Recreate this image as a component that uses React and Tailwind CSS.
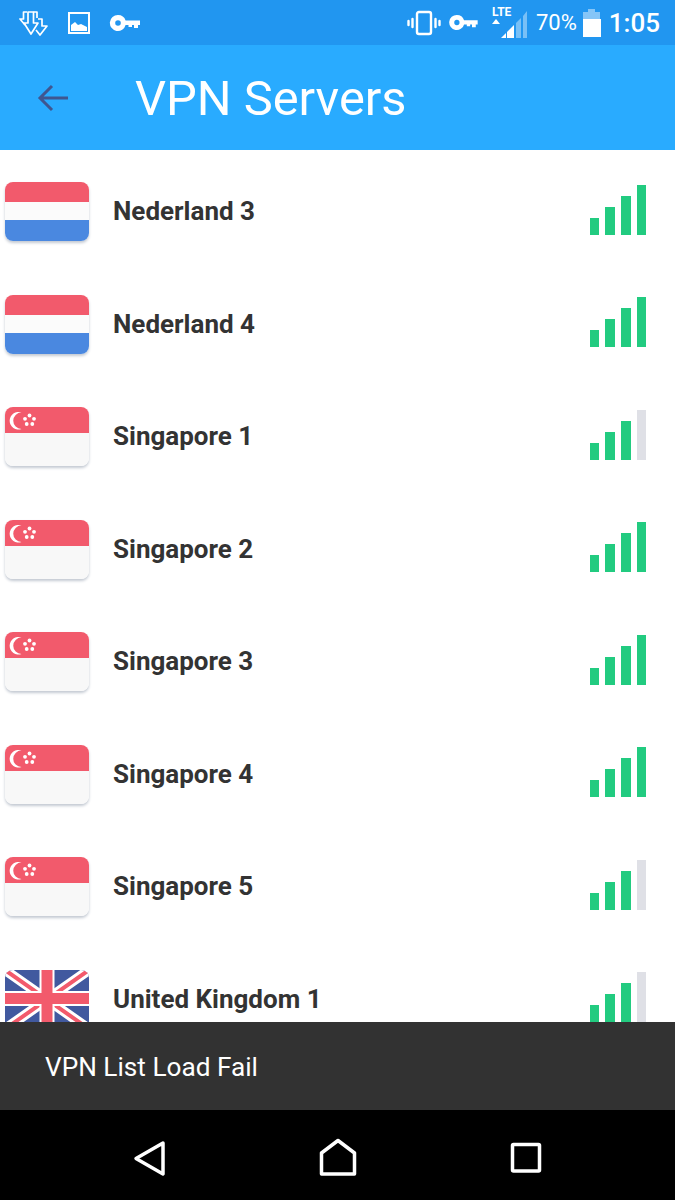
const font = { fontFamily: "Roboto, 'Liberation Sans', sans-serif" };

function Bars({ weak }) {
  return (
    <div className="flex items-end gap-[6px] h-[50px] mb-[4px]">
      <div className="w-[9px] h-[17px] bg-[#22cb80]" />
      <div className="w-[10px] h-[28px] bg-[#22cb80]" />
      <div className="w-[10px] h-[39px] bg-[#22cb80]" />
      <div className={`w-[9px] h-[50px] ${weak ? "bg-[#dfe0e6]" : "bg-[#22cb80]"}`} />
    </div>
  );
}

function FlagNL() {
  return (
    <div className="w-[84px] h-[59px] rounded-[8px] overflow-hidden flex flex-col shadow-[0_2px_3px_#c3c9d2]">
      <div className="h-[20px] bg-[#f25a6c]" />
      <div className="h-[18px] bg-[#fbfbfb]" />
      <div className="h-[21px] bg-[#4a88e0]" />
    </div>
  );
}

function FlagSG() {
  return (
    <div className="w-[84px] h-[59px] rounded-[8px] overflow-hidden flex flex-col shadow-[0_2px_3px_#c3c9d2]">
      <div className="h-[26px] bg-[#f25a6c]">
        <svg width="84" height="26" viewBox="0 0 84 26" className="block">
          <path d="M16.500 5.500 A8.800 8.800 0 1 0 16.500 22 A6.600 6.600 0 1 1 16.500 5.500 Z" fill="#fff" />
          <g fill="#fff">
            <circle cx="24.500" cy="8.500" r="1.900" />
            <circle cx="29" cy="11.800" r="1.900" />
            <circle cx="27.300" cy="17" r="1.900" />
            <circle cx="21.700" cy="17" r="1.900" />
            <circle cx="20" cy="11.800" r="1.900" />
          </g>
        </svg>
      </div>
      <div className="flex-1 bg-[#f8f8f8]" />
    </div>
  );
}

function FlagUK() {
  return (
    <div className="w-[84px] h-[59px] rounded-[8px] overflow-hidden bg-[#41599f]">
      <svg width="84" height="59" viewBox="0 0 84 59" className="block">
        <path d="M0 0 L84 59 M84 0 L0 59" stroke="#fff" strokeWidth="10" />
        <path d="M0 0 L84 59 M84 0 L0 59" stroke="#f25a6c" strokeWidth="4" />
        <path d="M42 0 V59 M0 28.500 H84" stroke="#fff" strokeWidth="15" />
        <path d="M42 0 V59 M0 28.500 H84" stroke="#f25a6c" strokeWidth="11" />
      </svg>
    </div>
  );
}

const rows = [
  ["nl", "Nederland 3", false],
  ["nl", "Nederland 4", false],
  ["sg", "Singapore 1", true],
  ["sg", "Singapore 2", false],
  ["sg", "Singapore 3", false],
  ["sg", "Singapore 4", false],
  ["sg", "Singapore 5", true],
  ["uk", "United Kingdom 1", true],
];

function Row({ flag, name, weak }) {
  return (
    <div className="h-[112.55px] shrink-0 flex items-center pl-[5px] pr-[29px]">
      {flag === "nl" && <FlagNL />}
      {flag === "sg" && <FlagSG />}
      {flag === "uk" && <FlagUK />}
      <div className="ml-[24px] flex-1 text-[26px] font-bold text-[#333333]">{name}</div>
      <Bars weak={weak} />
    </div>
  );
}

function Key({ width = 34, height = 18 }) {
  return (
    <svg width={width} height={height} viewBox="0 0 32 18" fill="#fff">
      <path fillRule="evenodd" d="M9 1a8 8 0 0 1 7.600 5.500H31V11h-2v3h-4v-3h-2v2h-3.500v-2h-2.900A8 8 0 1 1 9 1Zm0 5.200a2.800 2.800 0 1 0 0 5.600 2.800 2.800 0 0 0 0-5.600Z" />
    </svg>
  );
}

function StatusBar() {
  return (
    <div className="h-[45px] shrink-0 bg-[#2196f0] flex items-center pl-[19px] pr-[15px] text-white">
      <svg width="30" height="26" viewBox="0 0 30 26" fill="none" stroke="#fff" strokeWidth="1.700" strokeLinejoin="round">
        <path d="M6 15 1 9h3.500V2H8" />
        <path d="M9 2h5.500v11H19l-7 11-7-11h4z" />
        <path d="M14.500 2H18v6M19 9h4v7h5l-7 9-4-5" />
      </svg>
      <svg width="24" height="24" viewBox="0 0 24 24" className="ml-[18px]" fill="none">
        <rect x="2" y="2" width="20" height="20" stroke="#fff" strokeWidth="2" />
        <path d="M4 20v-6l4-3 3 3 3-1 6 3v4z" fill="#fff" />
      </svg>
      <div className="ml-[17px]"><Key /></div>
      <div className="flex-1" />
      <svg width="34" height="26" viewBox="0 0 34 26" fill="none" stroke="#fff" strokeLinecap="round">
        <rect x="10" y="2" width="14" height="22" rx="2" strokeWidth="2.400" />
        <path d="M5.500 9v8M1.500 11v4M28.500 9v8M32.500 11v4" strokeWidth="2.400" />
      </svg>
      <div className="ml-[7px]"><Key width="31" height="17" /></div>
      <div className="ml-[12px] relative w-[38px] h-[34px]">
        <span className="absolute left-[1px] top-[-1px] text-[12px] font-bold leading-[14px]">LTE</span>
        <svg width="38" height="34" viewBox="0 0 38 34" className="absolute left-0 top-0">
          <path d="M1 18 L5 13 L9 18Z" fill="#fff" />
          <path d="M10 32 15 27V32Z" fill="#fff" />
          <path d="M16 32V26L23 19V32Z" fill="#fff" />
          <path d="M25 32V17L30 12V32Z" fill="#fff" fillOpacity="0.4" />
          <path d="M32 32V10L36 5V32Z" fill="#fff" fillOpacity="0.4" />
        </svg>
      </div>
      <span className="ml-[7px] text-[22px] leading-none">70%</span>
      <svg width="20" height="28" viewBox="0 0 20 28" className="ml-[5px]">
        <path d="M6 0h7v3h5v8H1V3h5z" fill="#fff" fillOpacity="0.45" />
        <rect x="1" y="10" width="18" height="18" fill="#fff" />
      </svg>
      <span className="ml-[7px] text-[26px] font-medium leading-none">1:05</span>
    </div>
  );
}

export default function App() {
  return (
    <div style={font} className="w-[675px] h-[1200px] flex flex-col overflow-hidden bg-white">
      <StatusBar />
      <div className="h-[105px] shrink-0 bg-[#29abff] flex items-center">
        <svg width="32" height="30" viewBox="0 0 32 30" className="ml-[37px]" fill="none" stroke="#3f5690" strokeWidth="3">
          <path d="M31 15H3M15 3 3 15l12 12" />
        </svg>
        <span className="ml-[66px] pt-[4px] text-[48.8px] leading-none text-white">VPN Servers</span>
      </div>
      <div className="flex-1 min-h-0 overflow-hidden pt-[5.3px] flex flex-col">
        {rows.map(([flag, name, weak]) => (
          <Row key={name} flag={flag} name={name} weak={weak} />
        ))}
      </div>
      <div className="h-[88px] shrink-0 bg-[#323232] flex items-center pl-[45px] pt-[4px] text-[26.2px] text-white">
        VPN List Load Fail
      </div>
      <div className="h-[90px] shrink-0 bg-black">
        <svg width="675" height="90" viewBox="0 0 675 90" fill="none" stroke="#fff" strokeWidth="3.500" strokeLinejoin="round">
          <path d="M163 33 136 48.500 163 64Z" />
          <path d="M321.500 64V43L338 30.500 354.500 43V64Z" />
          <rect x="512.500" y="34.500" width="27" height="26.500" rx="1" />
        </svg>
      </div>
    </div>
  );
}
